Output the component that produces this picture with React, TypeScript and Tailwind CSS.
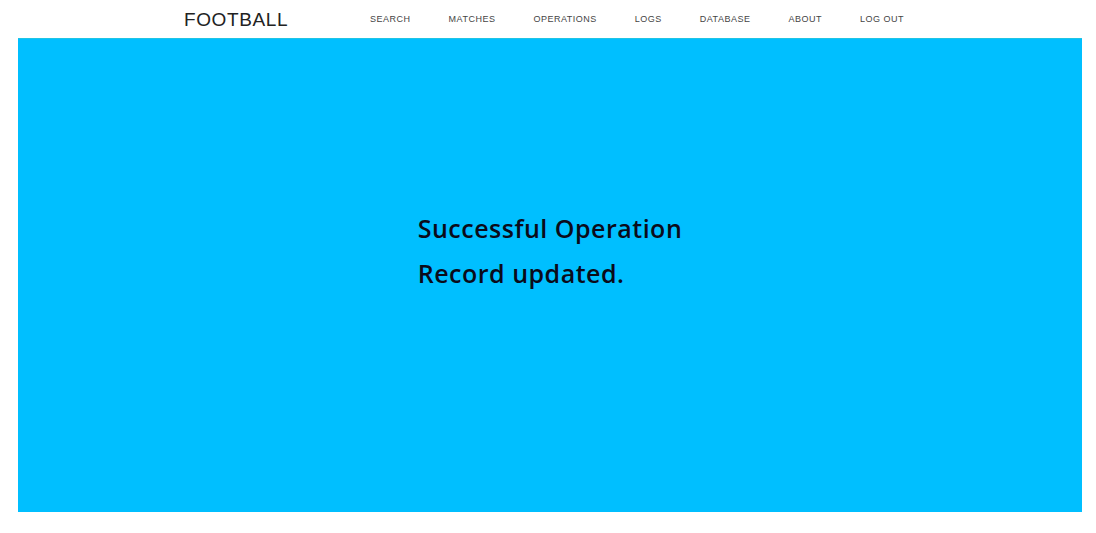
const links = ['SEARCH', 'MATCHES', 'OPERATIONS', 'LOGS', 'DATABASE', 'ABOUT', 'LOG OUT'];

export default function App() {
  return (
    <div className="min-h-[533px] w-[1096px] bg-white font-['Liberation_Sans',Arial,sans-serif]">
      {/* Top nav */}
      <header className="flex h-[38px] items-center pl-[184px]">
        <a className="text-[19px] leading-none tracking-[0.6px] text-[#222]">FOOTBALL</a>
        <nav className="ml-[82px] flex items-center gap-[38px]">
          {links.map((l) => (
            <a key={l} className="text-[9px] leading-none tracking-[0.5px] text-[#444]">
              {l}
            </a>
          ))}
        </nav>
      </header>

      {/* Banner */}
      <main className="ml-[18px] flex h-[474px] w-[1064px] justify-center border-t border-[#20c4e4] bg-[#00bfff] pt-[167px]">
        <div className="font-['Open_Sans',sans-serif] text-[25px] font-semibold tracking-[0.5px] text-[#0b0b1a]">
          <p className="leading-[45px]">Successful Operation</p>
          <p className="leading-[45px]">Record updated.</p>
        </div>
      </main>
    </div>
  );
}
